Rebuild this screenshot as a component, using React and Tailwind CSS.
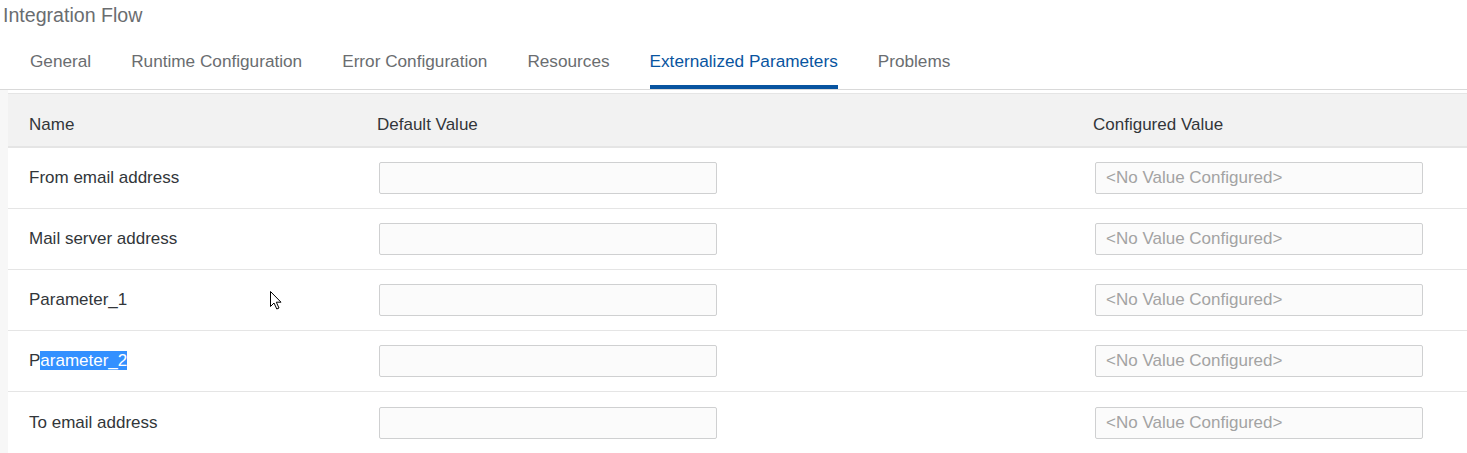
import React from "react";

const tabs = [
  "General",
  "Runtime Configuration",
  "Error Configuration",
  "Resources",
  "Externalized Parameters",
  "Problems",
];

const rows = [
  "From email address",
  "Mail server address",
  "Parameter_1",
  "Parameter_2",
  "To email address",
];

function Cursor() {
  return (
    <svg
      className="absolute left-[269px] top-[290px]"
      width="14"
      height="21"
      viewBox="0 0 14 21"
    >
      <path
        d="M1.5 1.5 L1.5 16.5 L5 13 L7.8 19 L10 18 L7.3 12.2 L12 12.2 Z"
        fill="#ffffff"
        stroke="#000000"
        strokeWidth="1"
        strokeLinejoin="miter"
      />
    </svg>
  );
}

function Row({ name, last }) {
  return (
    <div
      className={
        "grid grid-cols-[361px_716px_1fr] h-[61px] items-center bg-white " +
        (last ? "" : "border-b border-[#e5e5e5]")
      }
    >
      <div className="pl-[21px] text-[17px] leading-[24px] text-[#32363a]">
        {name === "Parameter_2" ? (
          <span>
            P<span className="bg-[#3390ff] text-white">arameter_2</span>
          </span>
        ) : (
          name
        )}
      </div>
      <div className="pl-[10px]">
        <div className="w-[338px] h-[32px] rounded-[2px] border border-[#cfd0d1] bg-[#fbfbfb]" />
      </div>
      <div className="pl-[10px]">
        <div className="w-[328px] h-[32px] rounded-[2px] border border-[#cfd0d1] bg-[#fbfbfb] flex items-center pl-[10px] text-[17px] text-[#a3a3a3]">
          &lt;No Value Configured&gt;
        </div>
      </div>
    </div>
  );
}

export default function App() {
  return (
    <div
      className="relative w-[1467px] h-[453px] overflow-hidden bg-white"
      style={{ fontFamily: '"Liberation Sans", Arial, sans-serif' }}
    >
      <div className="h-[30px] pl-[3px] text-[19.6px] leading-[30px] text-[#6a6d70]">
        Integration Flow
      </div>
      <div className="flex pl-[10px] border-b border-[#d9d9d9]">
        {tabs.map((t) => {
          const active = t === "Externalized Parameters";
          return (
            <div key={t} className="px-[20px]">
              <div
                className={
                  "pt-[19px] pb-[12px] text-[17.2px] leading-[24px] border-b-4 rounded-t-[2px] " +
                  (active
                    ? "text-[#0854a0] border-[#0854a0]"
                    : "text-[#6a6d70] border-transparent")
                }
              >
                {t}
              </div>
            </div>
          );
        })}
      </div>
      <div className="bg-[#f7f7f7] pl-[8px] h-full">
        <div className="bg-white pt-[3px]">
          <div className="grid grid-cols-[361px_716px_1fr] h-[55px] items-start pt-[19px] leading-[24px] bg-[#f2f2f2] border-t border-b-2 border-[#e5e5e5] text-[17px] text-[#32363a]">
            <div className="pl-[21px]">Name</div>
            <div className="pl-[8px]">Default Value</div>
            <div className="pl-[8px]">Configured Value</div>
          </div>
          {rows.map((r, i) => (
            <Row key={r} name={r} last={i === rows.length - 1} />
          ))}
        </div>
      </div>
      <Cursor />
    </div>
  );
}
